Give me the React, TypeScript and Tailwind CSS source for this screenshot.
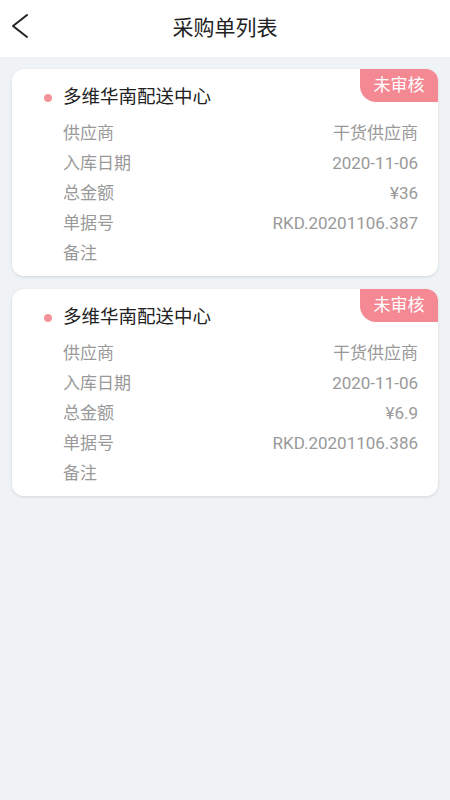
const orders = [
  { id: 1, name: '多维华南配送中心', supplier: '干货供应商', date: '2020-11-06', amount: '¥36', no: 'RKD.20201106.387', remark: '' },
  { id: 2, name: '多维华南配送中心', supplier: '干货供应商', date: '2020-11-06', amount: '¥6.9', no: 'RKD.20201106.386', remark: '' },
]

function Row({ label, value }: { label: string; value: string }) {
  return (
    <div className="h-[30px] flex items-center justify-between text-[17px] text-[#999999]">
      <span>{label}</span>
      <span>{value}</span>
    </div>
  )
}

export default function App() {
  return (
    <div
      className="w-[450px] h-[800px] bg-[#eff3f6] flex flex-col"
      style={{ fontFamily: 'Roboto, "Noto Sans CJK SC", sans-serif' }}
    >
      {/* Header */}
      <div className="h-[57px] bg-white flex items-center relative shrink-0">
        <svg className="absolute left-[10px] top-[13px]" width="20" height="26" viewBox="0 0 20 26" fill="none">
          <polyline points="17,2 3,13 17,24" stroke="#222" strokeWidth="2" strokeLinecap="round" strokeLinejoin="round" />
        </svg>
        <h1 className="flex-1 text-center text-[21px] text-[#222]">采购单列表</h1>
      </div>

      {/* List */}
      <div className="flex flex-col gap-[13px] px-[12px] pt-[12px]">
        {orders.map((o) => (
          <div
            key={o.id}
            className="relative bg-white rounded-[12px] shadow-[0_1px_3px_rgba(0,0,0,0.12)] pl-[51px] pr-[20px] pt-[14px] pb-[7px]"
          >
            <div className="absolute top-0 right-0 w-[78px] h-[33px] bg-[#f48893] rounded-tr-[12px] rounded-bl-[16px] flex items-center justify-center text-white text-[17px]">
              未审核
            </div>
            <div className="h-[30px] flex items-center relative text-[18.5px] text-[#222]">
              <span className="absolute -left-[19px] w-[8px] h-[8px] rounded-full bg-[#f2939b]" />
              {o.name}
            </div>
            <div className="mt-[6px]">
              <Row label="供应商" value={o.supplier} />
              <Row label="入库日期" value={o.date} />
              <Row label="总金额" value={o.amount} />
              <Row label="单据号" value={o.no} />
              <Row label="备注" value={o.remark} />
            </div>
          </div>
        ))}
      </div>
    </div>
  )
}
